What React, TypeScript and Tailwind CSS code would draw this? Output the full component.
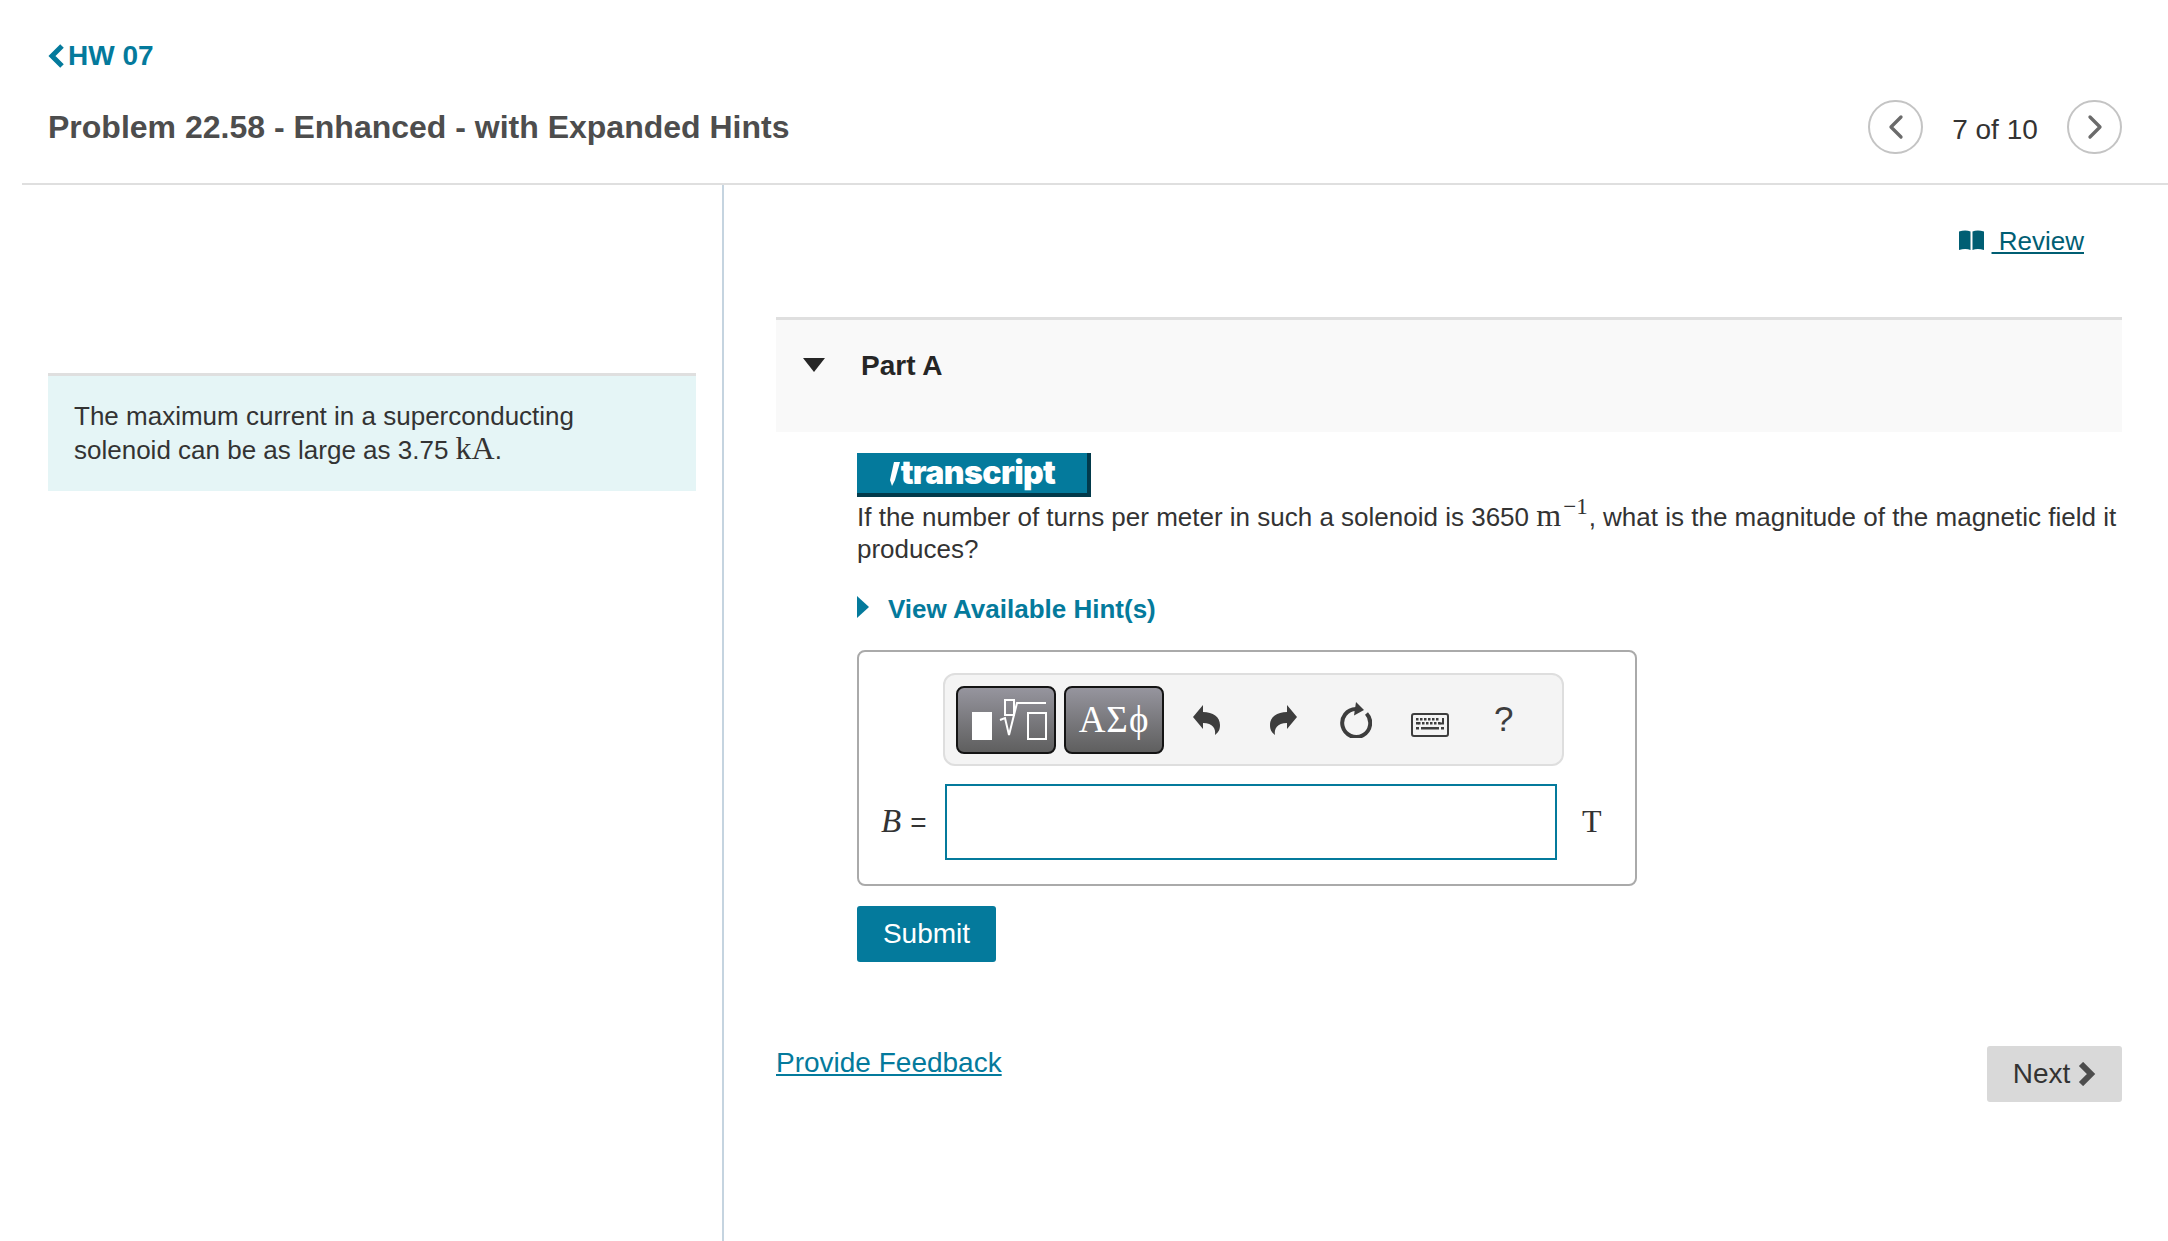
import { ChevronLeft, ChevronRight } from 'lucide-react'

const sans = "font-['Liberation_Sans',Arial,sans-serif]"
const serif = "font-['Liberation_Serif',serif]"

function CircleNav({ children }: { children: React.ReactNode }) {
  return (
    <button className="w-[55px] h-[54px] rounded-full border-2 border-[#c4c4c4] flex items-center justify-center text-[#6b6b6b] bg-white">
      {children}
    </button>
  )
}

function BookIcon() {
  return (
    <svg width="25" height="21" viewBox="0 0 25 21" className="shrink-0">
      <path d="M0 1.5 C4 0 8.5 0 11.5 1.5 V20 C8.5 18.8 4 18.8 0 20 Z" fill="#005e73" />
      <path d="M25 1.5 C21 0 16.5 0 13.5 1.5 V20 C16.5 18.8 21 18.8 25 20 Z" fill="#005e73" />
    </svg>
  )
}

function TemplatesIcon() {
  return (
    <svg width="96" height="64" viewBox="0 0 96 64">
      <rect x="14" y="24" width="20" height="28" fill="#fff" />
      <rect x="47" y="12" width="9" height="15" fill="none" stroke="#fff" strokeWidth="2" />
      <path d="M42 32 L47 30 L51 47 L59 15 H88" fill="none" stroke="#fff" strokeWidth="2" />
      <rect x="70" y="25" width="18" height="26" fill="none" stroke="#fff" strokeWidth="2" />
    </svg>
  )
}

function UndoIcon({ flip }: { flip?: boolean }) {
  return (
    <svg width="27" height="30" viewBox="0 0 27 30" className={flip ? '-scale-x-100' : ''}>
      <path d="M0 12 L10 0 V7 C20 7 27 12 27 20 C27 24 26 27 22 30 C23 24 20 18 10 18 V24 Z" fill="#3d3d3d" />
    </svg>
  )
}

function ResetIcon() {
  return (
    <svg width="32" height="36" viewBox="0 0 32 36">
      <path d="M16 7 A14 14 0 1 0 26.5 11.5" fill="none" stroke="#3d3d3d" strokeWidth="4" />
      <path d="M16 0 L24 8 L14 13.5 Z" fill="#3d3d3d" />
    </svg>
  )
}

function KeyboardIcon() {
  const top = [9, 13, 17, 21, 25, 29]
  return (
    <svg width="38" height="24" viewBox="0 0 38 24">
      <rect x="1" y="1" width="36" height="22" rx="2" fill="#f4f4f4" stroke="#3d3d3d" strokeWidth="2" />
      {top.map((x) => <rect key={x} x={x - 4} y="5" width="2.5" height="2.5" fill="#3d3d3d" />)}
      {top.map((x) => <rect key={x} x={x - 2} y="9" width="2.5" height="2.5" fill="#3d3d3d" />)}
      <path d="M31 5 H33 V11.5 H28.5 V9.5 H31 Z" fill="#3d3d3d" />
      <rect x="5" y="9" width="2.5" height="2.5" fill="#3d3d3d" />
      <rect x="5" y="14" width="3" height="2.5" fill="#3d3d3d" />
      <rect x="10" y="14" width="18" height="2.5" fill="#3d3d3d" />
      <rect x="30" y="14" width="3" height="2.5" fill="#3d3d3d" />
    </svg>
  )
}

function ToolButton({ children }: { children: React.ReactNode }) {
  return (
    <button className="w-[100px] h-[68px] rounded-[8px] border-2 border-[#141414] bg-gradient-to-b from-[#96959e] to-[#5f5f5f] flex items-center justify-center text-white">
      {children}
    </button>
  )
}

export default function App() {
  return (
    <div className={`${sans} w-full h-[1241px] overflow-hidden bg-white flex flex-col`}>
      {/* Header */}
      <div className="ml-[22px] h-[185px] border-b-2 border-[#dfdfdf] pl-[26px] pr-[46px] pt-[39px] shrink-0">
        <a className="flex items-center h-[34px] text-[#047a9c] font-bold text-[28px]">
          <svg width="18" height="24" viewBox="0 0 18 24" className="mr-[2px]">
            <path d="M14 2 L4 12 L14 22" fill="none" stroke="#047a9c" strokeWidth="5" />
          </svg>
          HW 07
        </a>
        <div className="flex items-center justify-between mt-[27px]">
          <h1 className="text-[32px] font-bold text-[#4d4d4d] leading-[54px]">Problem 22.58 - Enhanced - with Expanded Hints</h1>
          <div className="flex items-center text-[#333] text-[28px]">
            <CircleNav><ChevronLeft size={40} strokeWidth={2} /></CircleNav>
            <span className="w-[144px] text-center mt-[6px]">7 of 10</span>
            <CircleNav><ChevronRight size={40} strokeWidth={2} /></CircleNav>
          </div>
        </div>
      </div>

      <div className="flex flex-1 ml-[22px]">
        {/* Left column */}
        <div className="w-[702px] shrink-0 border-r-2 border-[#c5d4e0] pl-[26px] pr-[26px] pt-[188px]">
          <div className="h-[118px] bg-[#e5f5f6] border-t-[3px] border-[#dfdfdf] px-[26px] pt-[25px] text-[26px] leading-[31px] text-[#333]">
            The maximum current in a superconducting solenoid can be as large as 3.75 <span className={`${serif} text-[32px] leading-none`}>kA</span>.
          </div>
        </div>

        {/* Right column */}
        <div className="flex-1 pl-[52px] pr-[46px]">
          <div className="flex justify-end pr-[38px] pt-[40px] h-[132px]">
            <a className="flex items-start text-[#005e73] text-[26px] leading-[32px] underline">
              <span className="mt-[5px] mr-[8px]"><BookIcon /></span>
              <span>&nbsp;Review</span>
            </a>
          </div>

          <div className="h-[115px] bg-[#f9f9f9] border-t-[3px] border-[#dfdfdf] flex items-start pl-[27px] pt-[26px]">
            <svg width="22" height="14" viewBox="0 0 22 14" className="mt-[12px]">
              <path d="M0 0 H22 L11 14 Z" fill="#262626" />
            </svg>
            <span className="ml-[36px] text-[28px] leading-[40px] font-bold text-[#262626]">Part A</span>
          </div>

          <div className="pl-[81px]">
            <div className="mt-[21px] w-[234px] h-[44px] bg-[#047a9c] border-r-[4px] border-b-[4px] border-[#023a4b] flex items-center justify-center text-white">
              <svg width="12" height="26" viewBox="0 0 12 26" className="mt-[1px]">
                <path d="M5 1 H11 L6 19 L3 25 L1 19 Z" fill="#fff" />
              </svg>
              <span className="font-['Inter',sans-serif] font-black text-[32px] leading-[40px] tracking-[-0.6px] mt-[-1px]">transcript</span>
            </div>

            <p className="text-[26px] leading-[32px] text-[#333] mt-[2px]">
              If the number of turns per meter in such a solenoid is 3650 <span className={`${serif} text-[32px] leading-none`}>m</span><sup className={`${serif} text-[23px] top-[-12px] leading-none ml-[2px] mr-[1px]`}>−1</sup>, what is the magnitude of the magnetic field it produces?
            </p>

            <div className="flex items-center mt-[28px] text-[#047a9c] font-bold text-[26px] leading-[32px]">
              <svg width="12" height="22" viewBox="0 0 12 22" className="mt-[-5px]">
                <path d="M0 0 L12 11 L0 22 Z" fill="#047a9c" />
              </svg>
              <span className="ml-[19px]">View Available Hint(s)</span>
            </div>

            {/* Answer box */}
            <div className="mt-[25px] w-[780px] h-[236px] rounded-[8px] border-2 border-[#aaa] pt-[21px] pl-[84px]">
              <div className="w-[621px] h-[93px] rounded-[12px] border-2 border-[#dedede] bg-[#f4f4f4] flex items-center pl-[11px]">
                <ToolButton><TemplatesIcon /></ToolButton>
                <div className="w-[8px]" />
                <ToolButton><span className={`${serif} text-[37px] tracking-[1px]`}>ΑΣϕ</span></ToolButton>
                <div className="flex items-center">
                  <span className="ml-[29px] flex"><UndoIcon /></span>
                  <span className="ml-[50px] flex"><UndoIcon flip /></span>
                  <span className="ml-[43px] flex"><ResetIcon /></span>
                  <span className="ml-[39px] flex mt-[10px]"><KeyboardIcon /></span>
                  <span className="ml-[45px] flex text-[35px] text-[#3d3d3d]">?</span>
                </div>
              </div>
              <div className="flex items-center ml-[-84px] mt-[18px] h-[76px]">
                <span className="w-[87px] pl-[22px] text-[28px] text-[#333] whitespace-nowrap">
                  <i className={`${serif} text-[33px]`}>B</i><span className="ml-[9px]">=</span>
                </span>
                <div className="w-[612px] h-[76px] border-2 border-[#047a9c] bg-white ml-[-1px]" />
                <span className={`${serif} ml-[25px] mt-[-2px] text-[32px] text-[#333]`}>T</span>
              </div>
            </div>

            <button className="mt-[20px] w-[139px] h-[56px] rounded-[3px] bg-[#047a9c] text-white text-[28px] flex items-center justify-center">Submit</button>
          </div>

          <div className="flex items-start justify-between mt-[84px]">
            <a className="text-[#047a9c] text-[28px] leading-[32px] underline mt-[1px]">Provide Feedback</a>
            <button className="w-[135px] h-[56px] rounded-[3px] bg-[#d9d9d9] text-[#333] text-[28px] flex items-center justify-center">
              Next
              <svg width="18" height="24" viewBox="0 0 18 24" className="ml-[8px]">
                <path d="M3 2 L13 12 L3 22" fill="none" stroke="#4d4d4d" strokeWidth="6" />
              </svg>
            </button>
          </div>
        </div>
      </div>
    </div>
  )
}
